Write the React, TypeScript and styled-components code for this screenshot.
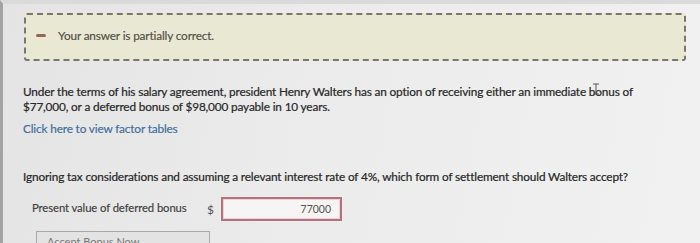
import React from "react";
import styled, { createGlobalStyle } from "styled-components";

const Global = createGlobalStyle`
  html, body { margin: 0; padding: 0; }
  body {
    width: 700px;
    height: 243px;
    overflow: hidden;
    font-family: Lato, "Open Sans", sans-serif;
    background: #e9e9e9;
  }
`;

const Screen = styled.div`
  position: relative;
  width: 700px;
  height: 243px;
  box-sizing: border-box;
  overflow: hidden;
  background: linear-gradient(100deg, #e4e4e4 0%, #ebebeb 40%, #f1f1f1 100%);
  border-left: 3px solid #a3a3a3;
  border-top: 4px solid #dadada;
  padding: 9px 14px 0 20px;
  display: flex;
  flex-direction: column;
  & > * { flex-shrink: 0; }
`;

const Alert = styled.div`
  height: 48px;
  box-sizing: border-box;
  margin-left: 1px;
  background: #e9e8d3;
  border: 2px dashed #77776f;
  border-radius: 3px;
  display: flex;
  align-items: center;
  gap: 12px;
  padding: 0 0 3px 10px;
`;

const Minus = styled.span`
  display: inline-block;
  width: 10px;
  height: 3px;
  border-radius: 2px;
  background: #8d6a5a;
`;

const AlertText = styled.span`
  font-size: 11.8px;
  letter-spacing: -0.15px;
  color: #4f4e46;
  -webkit-text-stroke: 0.15px #4f4e46;
`;

const Para = styled.p<{ $top: number }>`
  margin: ${(p) => p.$top}px 0 0 0;
  font-size: 11.8px;
  letter-spacing: -0.15px;
  line-height: 15px;
  color: #262626;
  -webkit-text-stroke: 0.2px #262626;
`;

const Link = styled.a`
  display: block;
  margin-top: 7px;
  font-size: 11.8px;
  letter-spacing: -0.15px;
  line-height: 15px;
  color: #3d6c9b;
  -webkit-text-stroke: 0.15px #3d6c9b;
  text-decoration: none;
`;

const Row = styled.div`
  display: flex;
  align-items: center;
  margin: 13px 0 0 9px;
`;

const Label = styled.span`
  font-size: 11.3px;
  letter-spacing: -0.1px;
  color: #3e3e3e;
  -webkit-text-stroke: 0.15px #3e3e3e;
  width: 175px;
  margin-top: -4px;
`;

const Dollar = styled.span`
  font-size: 12px;
  color: #555;
  width: 14px;
`;

const Field = styled.div`
  width: 121px;
  height: 24px;
  box-sizing: border-box;
  border: 2px solid #b27280;
  box-shadow: inset 0 0 0 1px #ead2d6;
  background: #f6f4f4;
  font-size: 10.5px;
  color: #555;
  display: flex;
  align-items: center;
  justify-content: flex-end;
  padding-right: 9px;
`;

const Button = styled.div`
  margin: 10px 0 0 13px;
  width: 174px;
  height: 22px;
  box-sizing: border-box;
  border: 1px solid #a8a8a8;
  background: #e3e3e3;
  font-size: 11px;
  color: #777;
  padding: 3px 0 0 10px;
`;

const Cursor = styled.svg`
  position: absolute;
  left: 589px;
  top: 79px;
`;

export default function App() {
  return (
    <>
      <Global />
      <Screen>
        <Alert>
          <Minus />
          <AlertText>Your answer is partially correct.</AlertText>
        </Alert>
        <Para $top={23}>
          Under the terms of his salary agreement, president Henry Walters has an option of receiving either an immediate bonus of
          <br />
          $77,000, or a deferred bonus of $98,000 payable in 10 years.
        </Para>
        <Link href="#">Click here to view factor tables</Link>
        <Para $top={33}>
          Ignoring tax considerations and assuming a relevant interest rate of 4%, which form of settlement should Walters accept?
        </Para>
        <Row>
          <Label>Present value of deferred bonus</Label>
          <Dollar>$</Dollar>
          <Field>77000</Field>
        </Row>
        <Button>Accept Bonus Now</Button>
        <Cursor width="8" height="12" viewBox="0 0 8 12">
          <path d="M1 1h6M4 1v10M1 11h6" stroke="#555" strokeWidth="1" fill="none" />
        </Cursor>
      </Screen>
    </>
  );
}
